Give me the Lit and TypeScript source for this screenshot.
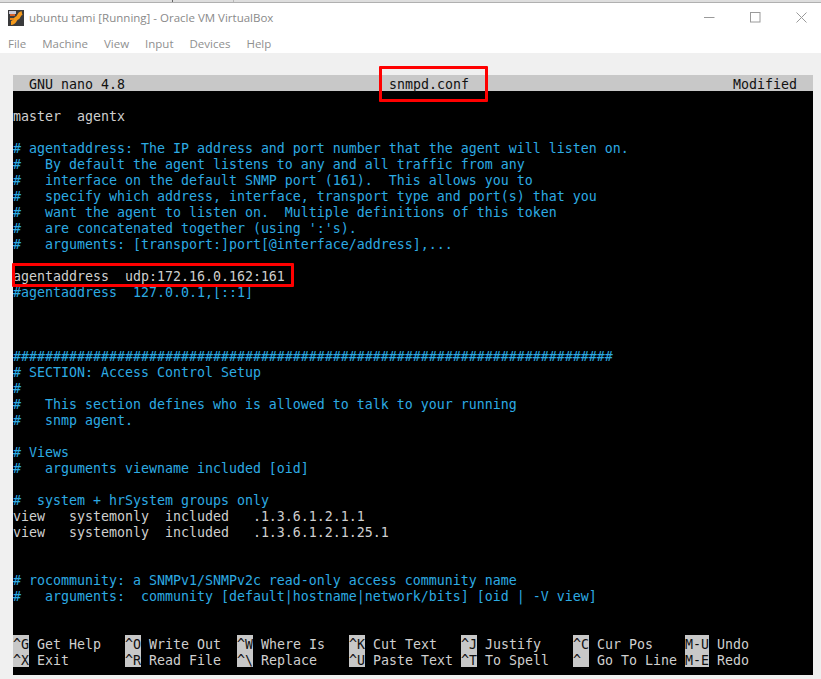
import { LitElement, html, css } from "lit";
import { customElement } from "lit/decorators.js";

type Row = [number, string, string?];

const ROWS: Row[] = [
  [2, "master  agentx"],
  [4, "# agentaddress: The IP address and port number that the agent will listen on.", "c"],
  [5, "#   By default the agent listens to any and all traffic from any", "c"],
  [6, "#   interface on the default SNMP port (161).  This allows you to", "c"],
  [7, "#   specify which address, interface, transport type and port(s) that you", "c"],
  [8, "#   want the agent to listen on.  Multiple definitions of this token", "c"],
  [9, "#   are concatenated together (using ':'s).", "c"],
  [10, "#   arguments: [transport:]port[@interface/address],...", "c"],
  [12, "agentaddress  udp:172.16.0.162:161"],
  [13, "#agentaddress  127.0.0.1,[::1]", "c"],
  [17, "#".repeat(75), "c"],
  [18, "# SECTION: Access Control Setup", "c"],
  [19, "#", "c"],
  [20, "#   This section defines who is allowed to talk to your running", "c"],
  [21, "#   snmp agent.", "c"],
  [23, "# Views", "c"],
  [24, "#   arguments viewname included [oid]", "c"],
  [26, "#  system + hrSystem groups only", "c"],
  [27, "view   systemonly  included   .1.3.6.1.2.1.1"],
  [28, "view   systemonly  included   .1.3.6.1.2.1.25.1"],
  [31, "# rocommunity: a SNMPv1/SNMPv2c read-only access community name", "c"],
  [32, "#   arguments:  community [default|hostname|network/bits] [oid | -V view]", "c"],
];

const HELP: [string, string, string, string][] = [
  ["^G", "Get Help", "^X", "Exit"],
  ["^O", "Write Out", "^R", "Read File"],
  ["^W", "Where Is", "^\\", "Replace"],
  ["^K", "Cut Text", "^U", "Paste Text"],
  ["^J", "Justify", "^T", "To Spell"],
  ["^C", "Cur Pos", "^_", "Go To Line"],
  ["M-U", "Undo", "M-E", "Redo"],
];

@customElement("app-root")
export class AppRoot extends LitElement {
  static styles = css`
    :host {
      display: block;
      width: 821px;
      height: 679px;
      overflow: hidden;
      background: #f0f0f0;
      position: relative;
    }
    .strip {
      height: 2px;
      background:
        linear-gradient(#666, #666) 172px 0 / 1px 3px no-repeat,
        linear-gradient(#b8b8b8, #b8b8b8) 233px 0 / 1px 3px no-repeat,
        #dedede;
    }
    .top {
      height: 1px;
      background: #b0b0b0;
    }
    .head {
      background: #fff;
      height: 50px;
      font-family: "Open Sans", "Noto Sans", sans-serif;
      font-size: 11.5px;
      color: #8f8f8f;
    }
    .titlebar {
      height: 29px;
      display: flex;
      align-items: center;
      padding-left: 8px;
      gap: 5px;
    }
    .titlebar .t {
      flex: 1;
      color: #8a8a8a;
    }
    .ctrls {
      display: flex;
      align-items: center;
      gap: 35px;
      padding-right: 14px;
    }
    .ctrls svg { display: block; }
    .menu {
      display: flex;
      gap: 16px;
      padding: 4px 0 0 8px;
      color: #8f8f8f;
    }
    .body {
      padding: 22px 8px 0 13px;
    }
    .term {
      width: 800px;
      height: 600px;
      background: #000;
      color: #cfcfcf;
      font-family: "DejaVu Sans Mono", "Liberation Mono", monospace;
      font-size: 13.29px;
      line-height: 20px;
      display: flex;
      flex-direction: column;
      overflow: hidden;
    }
    .bar {
      flex: none;
      height: 16px;
      background: #c8c8c8;
      color: #111;
      display: grid;
      grid-template-columns: 360px 80px 1fr;
      padding: 0 16px;
      white-space: pre;
    }
    .bar .r { text-align: right; }
    .line { flex: none; height: 16px; white-space: pre; }
    .c { color: #2dabe3; }
    .help {
      flex: none;
      display: grid;
      grid-template-columns: repeat(6, 112px) auto;
    }
    .cell { height: 16px; white-space: pre; }
    .k {
      display: inline-block;
      height: 16px;
      line-height: 20px;
      vertical-align: top;
      background: #c8c8c8;
      color: #111;
    }
    .box {
      position: absolute;
      border: 3px solid #f00;
      border-radius: 1px;
      box-sizing: border-box;
      pointer-events: none;
    }
    .b1 { left: 379px; top: 66px; width: 109px; height: 36px; }
    .b2 { left: 12px; top: 263px; width: 282px; height: 24px; }
  `;

  render() {
    const byRow = new Map(ROWS.map((r) => [r[0], r]));
    const rows = [];
    for (let i = 1; i < 35; i++) {
      const r = byRow.get(i);
      rows.push(
        html`<div class="line ${r && r[2] ? "c" : ""}">${r ? r[1] : ""}</div>`
      );
    }
    return html`
      <div class="strip"></div>
      <div class="top"></div>
      <div class="head">
        <div class="titlebar">
          <svg width="16" height="16" viewBox="0 0 16 16">
            <rect width="16" height="16" fill="#3a3a3c"></rect>
            <rect x="1" y="1" width="7" height="3" fill="#c9c9d6"></rect>
            <rect x="2" y="4" width="5" height="2" fill="#d9622a"></rect>
            <path d="M3 13 C7 13 6.500 9 9 8 C11.500 7 10 4 14 3" stroke="#f49a1c" stroke-width="4" fill="none"></path>
            <path d="M2 9 L6 9" stroke="#e8871a" stroke-width="2"></path>
          </svg>
          <span class="t">ubuntu tami [Running] - Oracle VM VirtualBox</span>
          <div class="ctrls">
            <svg width="11" height="11" viewBox="0 0 11 11"><path d="M0 5.5H10.500" stroke="#9a9a9a"></path></svg>
            <svg width="11" height="11" viewBox="0 0 11 11"><rect x=".5" y=".5" width="9.500" height="9.500" fill="none" stroke="#9a9a9a"></rect></svg>
            <svg width="11" height="11" viewBox="0 0 11 11"><path d="M.5 .5L10.500 10.500M10.500 .5L.5 10.500" stroke="#9a9a9a"></path></svg>
          </div>
        </div>
        <div class="menu">
          <span>File</span><span>Machine</span><span>View</span><span>Input</span><span>Devices</span><span>Help</span>
        </div>
      </div>
      <div class="body">
        <div class="term">
          <div class="bar"><span>GNU nano 4.8</span><span>snmpd.conf</span><span class="r">Modified</span></div>
          ${rows}
          <div class="help">
            ${HELP.map(
              (h) => html`<div>
                <div class="cell"><span class="k">${h[0]}</span> ${h[1]}</div>
                <div class="cell"><span class="k">${h[2]}</span> ${h[3]}</div>
              </div>`
            )}
          </div>
        </div>
      </div>
      <div class="box b1"></div>
      <div class="box b2"></div>
    `;
  }
}
